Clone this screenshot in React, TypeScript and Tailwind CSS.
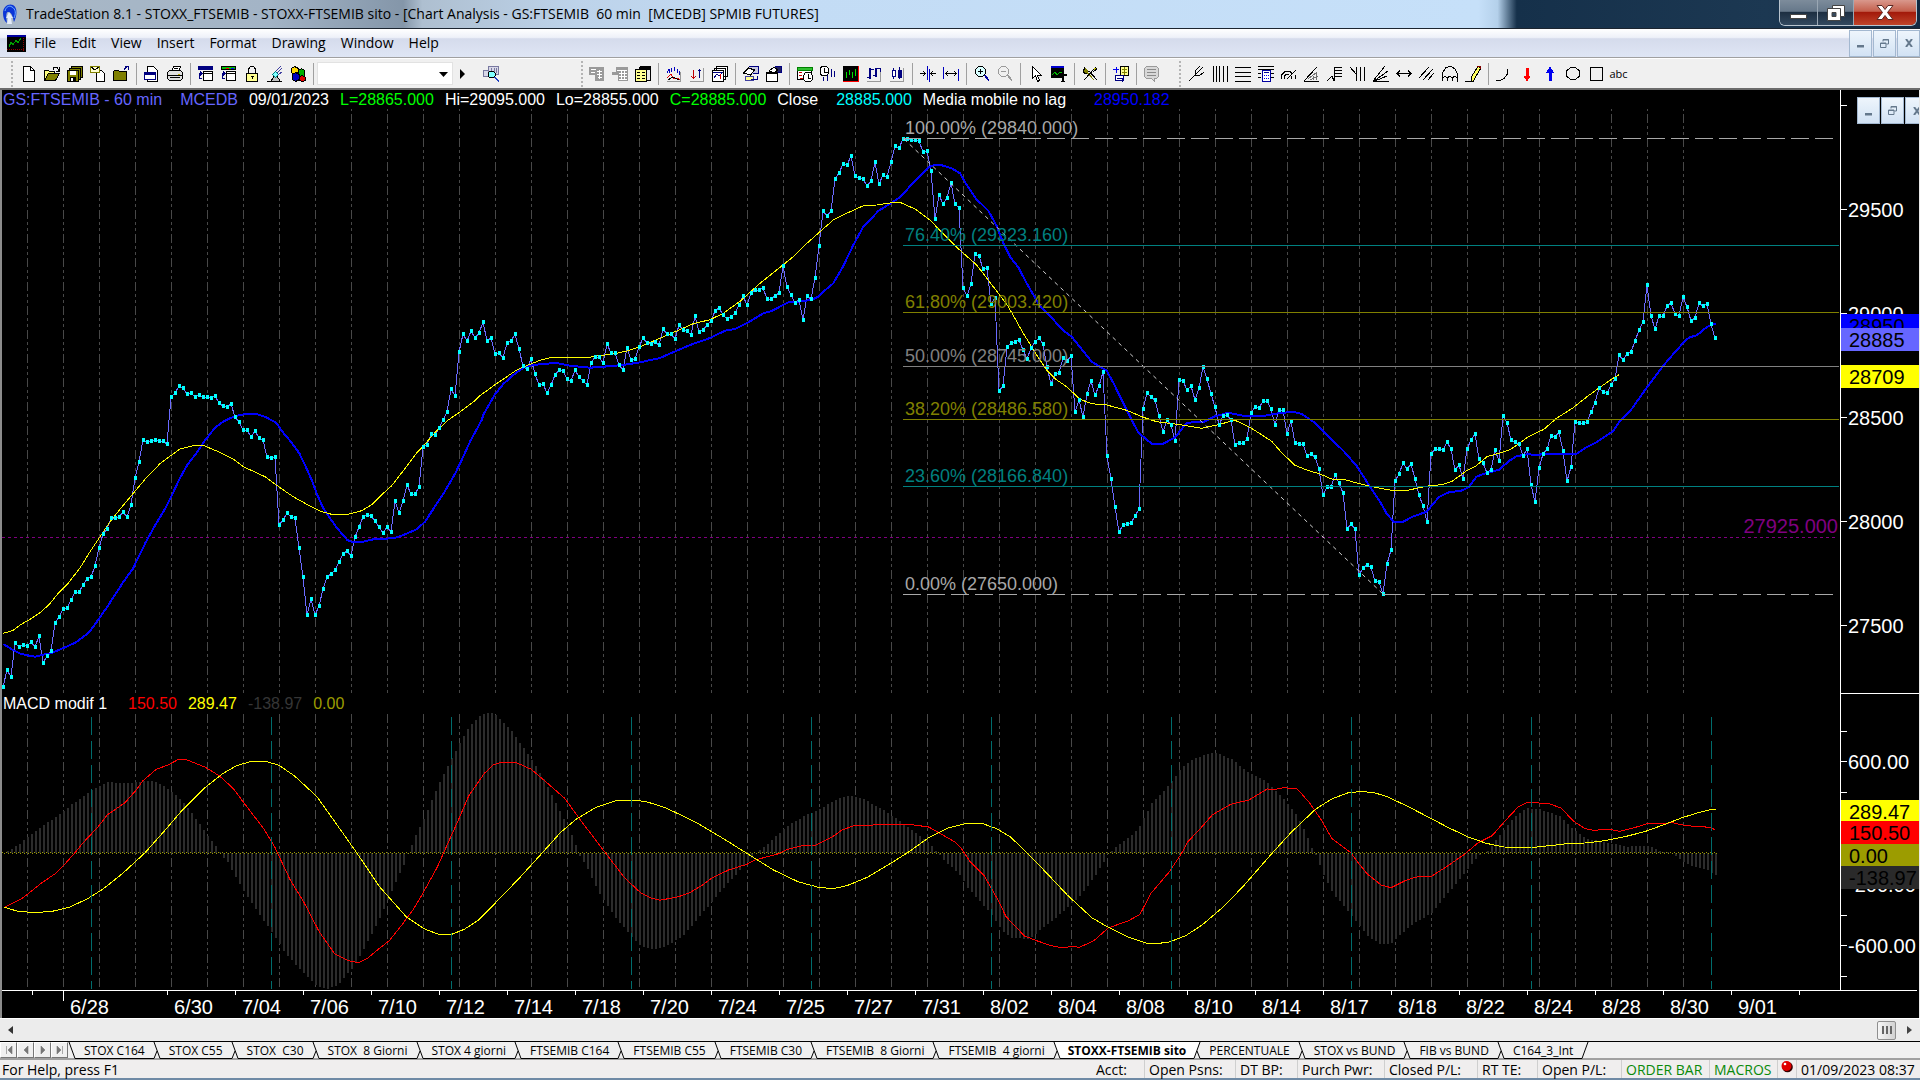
import React from "react";

/* ------------------------------------------------------------------ */
/* Chart data                                                          */
/* ------------------------------------------------------------------ */

// Closing prices, one per bar, as chart heights in thirds of a pixel.
// Each block lists its base line and the readings of consecutive bars.
const CLOSE_BLOCKS: { base: number; v: number[] }[] = [
  {
    base: 360,
    v: [
      981, 930, 951, 849, 861, 855, 858, 846, 861, 828, 909, 888, 873, 789, 771, 747, 744, 720, 696, 696, 675, 657, 651,
      618, 564, 522, 507, 474, 474, 471, 456, 471, 435, 354, 306, 240, 246, 243, 240, 243, 243, 252, 111, 99, 78, 84,
      102, 99, 111, 105, 111, 111, 114, 108, 129, 138, 141, 132, 171, 186, 210, 210, 231, 213, 234, 240, 291, 294, 291,
      495, 480, 459, 471, 474, 564, 651, 765, 717, 765, 738, 687, 651, 642, 630, 606, 582, 573, 588, 531, 501, 471, 465,
      468, 483, 501, 519, 501, 516, 423, 459, 423, 375, 402, 402, 381, 261, 255, 222, 225, 204, 180, 156, 87, 108,
      -24, -78, -57, -87, -66, -81,
    ],
  },
  {
    base: 130,
    v: [
      576, 633, 624, 672, 669, 684, 639, 633, 612, 657, 708, 717, 687, 732, 765, 762, 789, 765, 735, 720, 723, 747, 753,
      720, 741, 753, 765, 699, 681, 681, 699, 642, 669, 669, 705, 720, 654, 690, 687, 651, 624, 639, 642, 636, 645, 597,
      612, 612, 627, 585, 600, 603, 615, 558, 606, 600, 585, 573, 543, 534, 555, 567, 561, 549, 525, 498, 525, 489, 480,
      480, 474, 507, 507, 498, 489, 408, 471, 495, 519, 510, 570, 498, 507, 444, 348, 243, 258, 243, 147, 129, 102, 105,
      78, 138, 144, 147, 168, 153, 96, 162, 135, 141, 96, 48, 54,
    ],
  },
  {
    base: 120,
    v: [
      57, 57, 60, 60, 63, 96, 93, 153, 297, 225, 252, 234, 189, 252, 264, 504, 528, 492, 402, 408, 447, 444, 552, 534,
      813, 798, 681, 669, 666, 660, 690, 717, 684, 666, 654, 672, 741, 792, 762, 759, 714, 723, 708, 876, 840, 892, 822,
      783, 825, 798, 756, 1008, 1077, 1161, 1236, 1215, 1212, 1209, 1188, 1167, 867, 819, 831, 840, 888, 936, 900, 915,
      963, 780, 783, 810, 798, 840, 804, 741, 777, 822, 861, 915, 888, 885, 900, 975, 969, 969, 957, 879, 861, 864, 843,
      843, 867, 915, 870, 870, 942, 904, 969, 972, 972, 1008, 1002, 1011, 1047, 1125, 1101, 1101, 1065, 1089, 1119, 1227,
      1212, 1227, 1365, 1344, 1335, 1341, 1383, 1386, 1422,
    ],
  },
  {
    base: 260,
    v: [
      912, 870, 663, 642, 609, 627, 612, 657, 705, 738, 786, 582, 567, 567, 570, 546, 567, 630, 615, 657, 567, 540, 522,
      597, 609, 639, 630, 570, 603, 468, 489, 540, 546, 552, 588, 567, 675, 726, 624, 582, 567, 528, 531, 516, 573, 663,
      621, 485, 489, 489, 486, 456, 429, 384, 396, 399, 375, 357, 285, 300, 282, 276, 243, 210, 186, 75, 168, 207, 168,
      168, 138, 129, 162, 168, 111, 141, 183, 174, 129, 138, 132, 192, 234,
    ],
  },
];

type Pt = [number, number];

const CLOSE: Pt[] = CLOSE_BLOCKS.flatMap((b) => b.v.map((n) => b.base + n / 3)).map((y, i) => [
  3 + 4 * i,
  Math.round(y),
]);

// Curves are stored in blocks: origin x, origin y, horizontal resolution,
// then x,y pairs. Vertical resolution is three steps per pixel.
type Block = [number, number, number, string];

function curve(blocks: Block[]): Pt[] {
  return blocks.flatMap(([ox, oy, sx, s]) =>
    s.split(" ").map((p) => {
      const [x, y] = p.split(",").map(Number);
      return [ox + x / sx, oy + y / 3] as Pt;
    }),
  );
}

const pts = (a: Pt[]) => a.map(([x, y]) => `${x.toFixed(1)},${y.toFixed(1)}`).join(" ");

const FAST_MA = curve([
  [0, 360, 3, "10,852 34,867 58,880 82,886 106,890 130,884 154,880 178,869 202,859 226,848 250,830 266,818 280,800 298,775 322,740 346,703 370,666 398,627 416,590 438,545 466,495 494,448 514,410 538,358 562,315 590,278 612,245 628,225 646,202 670,185 694,173 718,165 745,161 768,162 795,170 828,188 850,218 875,248 898,280 915,315 935,360 952,405 970,445 990,475 1012,505 1042,540 1055,545 1090,545 1120,538 1150,536 1180,535 1210,525 1250,508 1275,485 1300,447 1330,402 1366,340 1385,300 1410,245 1445,180"],
  [480, 130, 3, "10,855 20,836 45,793 70,762 100,735 130,713 155,706 185,702 230,699 270,707 330,713 370,710 430,705 480,697 540,684 590,662 630,645 690,624 735,602 765,597 800,580 850,550 875,543 925,517 975,513 1000,507 1018,498 1030,485 1060,460 1090,408 1120,345 1150,290 1165,275 1195,243 1235,218 1260,202 1310,147 1345,112"],
  [880, 120, 3, "165,134 180,134 215,145 240,160 260,195 288,236 325,272 350,318 370,370 390,410 415,442 440,490 480,558 500,577 550,632 575,650 605,688 635,725 680,752 700,788 735,860 775,938 815,971 850,971 885,952 920,908 970,906 1005,889 1045,878 1090,887 1110,889 1145,889 1185,881 1240,875 1265,882 1300,905 1340,945 1390,992 1430,1038 1470,1100"],
  [1380, 260, 2.898, "0,725 20,762 40,785 65,786 95,770 135,755 170,712 195,698 240,691 258,680 280,650 300,642 345,629 375,602 395,589 430,582 450,586 480,581 530,581 568,583 595,564 630,545 675,514 695,483 730,446 775,380 820,318 845,288 888,238 900,231 918,226 945,203 962,193 974,192"],
]);

const SLOW_MA = curve([
  [0, 360, 3, "10,820 40,811 60,795 90,778 120,758 146,735 175,700 205,669 240,624 270,575 300,530 330,485 360,448 405,394 440,352 480,311 515,285 540,267 580,257 612,257 650,273 700,297 730,320 795,350 840,383 880,410 920,433 965,455 995,463 1045,463 1085,452 1115,434 1150,400 1175,377 1210,332 1250,279 1270,258 1310,212 1345,180 1380,156 1425,122"],
  [480, 130, 3, "0,797 45,764 110,720 150,703 180,691 210,683 320,683 350,678 400,672 440,663 480,650 540,625 590,603 640,581 690,569 730,550 780,514 840,460 900,412 940,380 975,345 1018,307 1060,270 1100,250 1150,227 1190,225"],
  [880, 120, 3, "35,248 60,247 105,267 150,300 190,342 235,386 290,435 340,500 385,560 430,640 470,705 500,750 530,780 560,800 600,838 635,851 680,855 740,871 790,892 830,905 900,914 965,925 1010,915 1065,901 1110,922 1175,964 1205,998 1245,1036 1280,1050 1320,1062 1355,1077 1395,1079 1450,1094"],
  [1380, 260, 2.898, "0,685 35,691 80,691 120,682 145,677 180,674 210,663 250,633 278,618 310,590 350,578 375,570 400,553 430,530 475,508 510,476 560,443 600,410 640,380 675,355 693,344"],
]);

const MACD_RED = curve([
  [0, 690, 2.24, "10,652 50,625 92,580 125,550 150,515 170,485 185,460 220,410 240,375 280,338 305,300 320,272 350,238 378,224 400,208 418,209 460,232 492,258 522,295 550,345 590,415 615,470 650,570 680,635 715,725 750,792 780,812 803,818 825,803 850,775 872,752 900,705 925,660 945,615 980,530 1000,470 1030,380 1050,318 1085,250 1105,224 1120,218 1155,217 1190,238 1220,272 1265,325 1300,390 1350,478 1400,565 1435,608 1460,625 1478,631 1520,620 1545,608"],
  [700, 690, 2.45, "5,586 30,563 70,540 115,523 135,510 190,492 215,478 250,467 282,466 325,440 348,420 380,406 470,404 520,404 560,411 585,428 625,456 640,475 662,515 695,555 730,630 750,680 795,738 825,752 860,767 890,774 910,769 930,772 965,752 1000,714 1050,692 1078,673 1105,610 1150,545 1180,490 1195,455 1225,417 1255,375 1300,343 1345,330 1390,297 1410,298 1430,293 1462,297"],
  [1300, 690, 2.525, "0,306 25,340 55,392 80,445 128,488 145,515 170,552 205,585 230,593 265,572 300,559 330,560 370,530 415,493 450,458 485,437 520,390 550,352 575,337 630,341 660,355 690,393 718,415 740,421 780,418 808,424 850,411 880,400 905,402 940,398 975,407 1035,412 1048,419"],
]);

const MACD_YELLOW = curve([
  [0, 690, 2.24, "10,652 40,664 80,668 120,663 155,652 195,627 230,598 275,550 325,488 370,420 410,358 460,292 500,250 530,227 560,215 595,214 625,226 660,258 710,320 750,395 800,490 850,590 910,680 950,716 980,732 1012,733 1040,718 1070,692 1120,625 1165,562 1215,488 1255,428 1290,388 1335,352 1380,332 1405,330 1445,334 1490,353 1530,378"],
  [700, 690, 2.45, "0,404 60,448 120,494 180,540 240,575 290,592 325,596 360,587 410,562 470,518 510,487 560,443 610,413 650,401 690,400 725,415 760,440 800,487 850,550 900,615 960,683 1000,712 1050,742 1095,760 1125,760 1150,756 1190,737 1230,705 1280,653 1330,590 1400,492 1450,425"],
  [1300, 690, 2.525, "0,402 40,357 80,327 120,309 155,304 190,309 220,320 270,348 330,385 375,413 425,441 470,460 515,471 590,472 640,466 680,460 720,459 770,452 820,440 870,425 910,408 965,383 1000,370 1040,358 1050,357"],
]);

const HISTOGRAM = curve([
  [0, 690, 2.24, "7,488 40,465 62,438 95,405 130,375 160,342 205,300 240,277 285,279 310,275 335,271 360,283 385,308 410,338 440,392 465,440 485,472 492,490 510,520 530,570 550,615 580,675 610,730 640,795 680,850 710,890 733,897 755,885 790,830 820,760 850,680 880,590 905,518 912,490 930,435 950,380 985,270 1010,205 1030,155 1050,108 1075,75 1097,65 1115,82 1145,125 1180,190 1220,275 1260,385 1285,450 1293,490 1310,525 1345,620 1375,680 1410,735 1435,770 1463,780 1490,770 1530,735"],
  [700, 690, 2.45, "7,665 40,615 75,568 115,515 135,490 165,460 210,410 260,373 285,362 340,323 370,317 400,328 450,362 510,412 555,455 580,488 600,515 635,555 655,595 710,670 740,725 765,745 805,746 830,722 885,668 935,610 970,550 990,510 998,490 1030,460 1070,420 1085,385 1105,340 1145,288 1180,230 1205,208 1245,190 1265,190 1300,207 1345,250 1385,275 1425,322 1460,375"],
  [1300, 690, 2.525, "7,415 27,472 38,495 58,555 80,608 120,665 150,710 170,740 200,762 230,760 250,735 285,700 330,670 360,625 400,570 430,525 450,495 475,480 505,430 540,380 570,355 600,357 655,378 690,420 720,447 765,455 820,470 880,468 905,483 940,490 960,510 990,530 1030,542 1052,558"],
]);

function valueAt(a: Pt[], x: number): number {
  for (let i = 1; i < a.length; i++) {
    if (x <= a[i][0]) {
      const t = Math.max(0, (x - a[i - 1][0]) / (a[i][0] - a[i - 1][0]));
      return a[i - 1][1] + t * (a[i][1] - a[i - 1][1]);
    }
  }
  return a[a.length - 1][1];
}

const ZERO_Y = 853;
const BARS = CLOSE.map(([x]) => {
  const y = Math.round(valueAt(HISTOGRAM, x));
  return { x, y: Math.min(y, ZERO_Y), h: Math.abs(y - ZERO_Y) };
});

const GRID = Array.from({ length: 47 }, (_, i) => 27 + 36 * i);
const CYCLES = Array.from({ length: 10 }, (_, i) => 91 + 180 * i);

const FIBS = [
  { y: 138.5, label: "100.00% (29840.000)", c: "#a8a8a8", dash: "18 6" },
  { y: 245.5, label: "76.40% (29323.160)", c: "#008080" },
  { y: 312.5, label: "61.80% (29003.420)", c: "#808000" },
  { y: 366.5, label: "50.00% (28745.000)", c: "#808080" },
  { y: 419.5, label: "38.20% (28486.580)", c: "#808000" },
  { y: 486.5, label: "23.60% (28166.840)", c: "#008080" },
  { y: 594.5, label: "0.00% (27650.000)", c: "#a8a8a8", dash: "18 6" },
];

const DATES = [
  "6/30", "7/04", "7/06", "7/10", "7/12", "7/14", "7/18", "7/20", "7/24", "7/25", "7/27", "7/31",
  "8/02", "8/04", "8/08", "8/10", "8/14", "8/17", "8/18", "8/22", "8/24", "8/28", "8/30", "9/01",
];

/* ------------------------------------------------------------------ */
/* Chart                                                               */
/* ------------------------------------------------------------------ */

function PricePane() {
  return (
    <svg className="block h-[584px] w-full font-['Liberation_Sans',sans-serif]" role="img" aria-label="FTSEMIB price chart">
      <g transform="translate(-2 -109)">
        <g stroke="#484848" strokeDasharray="9 3 3 3 3 3" strokeDashoffset="19" shapeRendering="crispEdges">
          {GRID.map((x) => (
            <line key={x} x1={x + 0.5} x2={x + 0.5} y1={109} y2={693} />
          ))}
        </g>
        <line x1="2" x2="100%" y1="537.5" y2="537.5" stroke="#800080" strokeDasharray="3 3" />
        <g fill="none" shapeRendering="crispEdges">
          <polyline points={pts(CLOSE)} stroke="#6a6aff" />
          <polyline points={pts(FAST_MA)} stroke="#0000ff" strokeWidth="2" />
          <polyline points={pts(SLOW_MA)} stroke="#ffff00" />
        </g>
        <g fill="#00ffff" shapeRendering="crispEdges">
          {CLOSE.map(([x, y]) => (
            <rect key={x} x={x - 1} y={y - 2} width="3" height="4" />
          ))}
        </g>
        <line x1="904" y1="139" x2="1383" y2="594" stroke="#d0d0d0" strokeDasharray="4 4" />
        {FIBS.map((f) => (
          <g key={f.label}>
            <line x1="903" x2="1839" y1={f.y} y2={f.y} stroke={f.c} strokeDasharray={f.dash} />
            <text x="905" y={f.y - 5} fill={f.c} fontSize="18">
              {f.label}
            </text>
          </g>
        ))}
        <text x="1838" y="533" fill="#800080" fontSize="20" textAnchor="end">
          27925.000
        </text>
      </g>
    </svg>
  );
}

function MacdPane() {
  return (
    <svg className="block h-[277px] w-full overflow-visible" role="img" aria-label="MACD indicator">
      <g transform="translate(-2 -714)">
        <g stroke="#484848" strokeDasharray="9 3 3 3 3 3" shapeRendering="crispEdges">
          {GRID.map((x) => (
            <line key={x} x1={x + 0.5} x2={x + 0.5} y1={714} y2={988} />
          ))}
        </g>
        <g fill="#2c2c2c" shapeRendering="crispEdges">
          {BARS.map((b) => (
            <rect key={b.x} x={b.x} y={b.y} width="2" height={b.h} />
          ))}
        </g>
        <g stroke="#9c9c00" strokeDasharray="1 3" shapeRendering="crispEdges">
          <line x1="2" x2="1718" y1="852.5" y2="852.5" />
          <line x1="4" x2="1718" y1="853.5" y2="853.5" />
        </g>
        <g fill="none" shapeRendering="crispEdges">
          <polyline points={pts(MACD_RED)} stroke="#ff0000" />
          <polyline points={pts(MACD_YELLOW)} stroke="#ffff00" />
        </g>
        <g stroke="#006c6c" strokeDasharray="18 6" shapeRendering="crispEdges">
          {CYCLES.map((x) => (
            <line key={x} x1={x + 0.5} x2={x + 0.5} y1={717} y2={989} />
          ))}
        </g>
      </g>
    </svg>
  );
}

const SCALE_TICKS = [105, 209, 313, 417, 521, 625, 731, 761, 792, 915, 945, 976];
const SCALE_LABELS: [number, string][] = [
  [209, "29500"],
  [313, "29000"],
  [417, "28500"],
  [521, "28000"],
  [625, "27500"],
  [761, "600.00"],
  [884, "-200.00"],
  [945, "-600.00"],
];
const SCALE_TAGS: [number, number, string, string][] = [
  [314, 23, "28950", "#0000ff"],
  [328, 23, "28885", "#6666ff"],
  [365, 23, "28709", "#ffff00"],
  [800, 21, "289.47", "#ffff00"],
  [821, 23, "150.50", "#ff0000"],
  [844, 22, "0.00", "#9c9c00"],
  [866, 23, "-138.97", "#2a2a2a"],
];

function ScaleColumn() {
  return (
    <svg className="block h-[901px] w-full font-['Liberation_Sans',sans-serif]" role="img" aria-label="Value scale">
      <g transform="translate(-1840 -90)" fontSize="20">
        <g stroke="#fff" shapeRendering="crispEdges">
          <line x1="1840.5" x2="1840.5" y1="90" y2="991" />
          <line x1="1840" x2="1919" y1="693.5" y2="693.5" />
          {SCALE_TICKS.map((y) => (
            <line key={y} x1="1841" x2="1847" y1={y + 0.5} y2={y + 0.5} />
          ))}
        </g>
        {SCALE_LABELS.map(([y, t]) => (
          <text key={t} x="1848" y={y + 8} fill="#fff">
            {t}
          </text>
        ))}
        {SCALE_TAGS.map(([y, h, t, c]) => (
          <g key={t}>
            <rect x="1841" y={y} width="78" height={h} fill={c} />
            <text x="1849" y={y + 19} fill="#000">
              {t}
            </text>
          </g>
        ))}
      </g>
    </svg>
  );
}

function DateAxis() {
  return (
    <svg className="block h-[28px] w-full font-['Liberation_Sans',sans-serif]" role="img" aria-label="Date axis">
      <g transform="translate(-2 -990)">
        <g stroke="#fff" shapeRendering="crispEdges">
          <line x1="2" x2="100%" y1="990.5" y2="990.5" />
          <line x1="32" x2="32" y1="991" y2="995" />
          <line x1="63.5" x2="63.5" y1="991" y2="1001" />
          {[...DATES, "end"].map((d, i) => (
            <line key={d} x1={167.5 + 68 * i} x2={167.5 + 68 * i} y1="991" y2="995" />
          ))}
        </g>
        <g fill="#fff" fontSize="20">
          <text x="70" y="1014">
            6/28
          </text>
          {DATES.map((d, i) => (
            <text key={d} x={174 + 68 * i} y="1014">
              {d}
            </text>
          ))}
        </g>
      </g>
    </svg>
  );
}

/* ------------------------------------------------------------------ */
/* Toolbar icons: [path, stroke, fill]                                 */
/* ------------------------------------------------------------------ */

type Shape = [string, string, string?];

const K = "#000";
const N = "#000080";
const W = "#fff";
const O = "#808000";
const G = "#9a9a9a";

const ICONS: Record<string, Shape[]> = {
  New: [["M2.5 .5h7l4 4v11h-11z", K, W], ["M9.5 .5v4h4", K]],
  Open: [["M.5 13.5v-9h4l1 1h5v3", K, "#ffff80"], ["M.5 14.5l4-7h11l-4 7z", K, O], ["M9 3.5l1-2h3l2 3M15.5 1v4h-4", K]],
  "Save all": [["M4.5 .5h11v11h-11z", K, O], ["M2.5 2.5h11v11h-11z", K, O], ["M.5 4.5h11v11h-11z", K, O], ["M3 5h6v4h-6z", "none", W], ["M3 11h6v4h-6z", "none", K], ["M4 12h2v3h-2z", "none", W]],
  "Mail document": [["M6.5 4.5h5l3 3v8h-8z", K, W], ["M.5 .5h9v6h-9z", O, "#ffffd0"], ["M1 1l4 3 4-3", K]],
  "Close workspace": [["M.5 14.5v-9l1-1h4l1 1h7v9z", K, O], ["M11 3.5l3-3M15.5 4v-3.500h-4", N]],
  "Document window": [["M3.500 .5h6l4 4v11h-10z", K, W], ["M.5 6.500h11v7h-11z", N, W], ["M.5 6h11v2h-11z", N, N]],
  Print: [["M4.500 5.500l2-5h7l-2 5z", K, W], ["M.5 6.500l2-2h11l2 2v6l-2 2h-11l-2-2z", K, "#e0e0e0"], ["M1 9.500h14M3 11.500h10", K], ["M7 2.500h4M6 4.500h4", K], ["M11 8h2", "#c0b000"]],
  "Time bars": [["M.5 .5h14v3h-14z", N, N], ["M5.500 5.500h9v9h-9z", K, W], ["M5 7.500h9", K], ["M4 12.500h-3v-5h3M2 5.500l2 2-2 2", N]],
  "Status bars": [["M.5 .5h14v3h-14z", K, "#00c000"], ["M5 2h3", "#f00"], ["M10 2h3", "#00f"], ["M5.500 5.500h9v9h-9z", K, W], ["M5 7.500h9", K], ["M4 12.500h-3v-5h3M2 5.500l2 2-2 2", N]],
  Lock: [["M4.500 7v-4l2-2.500h3l2 2.500v4", K], ["M2.500 7.500h11v8h-11z", K, "#ffff90"], ["M8 10v3M7 10.500h3", K]],
  Satellite: [["M8 9l-4 6h9l-3-5", K, "#c0c0c0"], ["M5.500 8.500l3-3 3 3-3 3z", "#008080", "#80ffff"], ["M9 5l5-5M10 7l5-5M11 9l4-3", "#4040a0"], ["M0 15.500h15", K]],
  Blocks: [["M1.500 2.500l3-2 4 2v4l-4 2-3-2z", K, "#ffd800"], ["M8.500 4.500l3-2 3 2v5l-3 2-3-2z", K, "#00b000"], ["M2.500 8.500l3-2 4 2v5l-4 2-3-2z", K, "#0000c0"], ["M9.500 10.500l3-1 3 2v3l-3 1-3-1z", K, "#e00000"]],
  "Find symbol": [["M.5 4.500h5v6h-5zM5.500 .5h10v8h-10z", "#7878a0", "#d8d8e8"], ["M8 2v5M11 2v5M13 2v5", "#7878a0"], ["M6.500 5.500h4l1.500 1.500v3l-1.500 1.500h-4l-1.500-1.500v-3z", K, "#80ffff"], ["M11 11l5 5M12 11l4 4", "#2040c0"]],
  "Order entry": [["M0 1h15v14h-9v-6h-6z", "none", G], ["M2 3.500h5M2 6.500h4M8 5.500h5M8 8.500h5M9 11.500h4M10.500 4v9", W]],
  "Order grid": [["M4 1h12v14h-10v-6h-6v-3h4z", "none", G], ["M5 4.500h10M7 7.500h8M7 10.500h8M7 13h8M9.500 4v10M12.500 4v10", W]],
  "Quote list": [["M4.500 .5h11v14h-4", K, "#e8e8e8"], ["M.5 3.500h11v12h-11z", K, "#ffff90"], ["M4.500 1h11v2h-11z", K, K], ["M2 6.500h3M2 9.500h3M2 12.500h3M7 6.500h3M7 9.500h3M7 12.500h3", K]],
  "Insert indicator": [["M1 15.500h13.500v-10", G], ["M1 7l2-4v4M5 6v-4M8 5v-4M11 7v-4M13 9v-4", "#0000c0"], ["M1 12l4-4 3 5 3-1 3 2", "#e00000"], ["M2 14l5-3 6 3", K]],
  "Insert signal": [["M1 15.500h13.500v-14", G], ["M4.500 4v9M2.500 10.500l2 2 2-2", "#c00000"], ["M10.500 3v9M8.500 5.500l2-2 2 2", N]],
  "Chart stack": [["M4.500 .5h11v10h-11zM2.500 2.500h11v11h-11z", K, W], ["M.5 4.500h11v11h-11z", K, W], ["M1 6h10M2 12l3-4 2 2 3-3", N], ["M8 8v5", "#e00000"]],
  "Format symbol": [["M5.500 .5h10v7h-6", N, "#c8c8e0"], ["M.5 7l5-5 6 2-4 5z", K, W], ["M2 10.500h8v4h-8z", "#4040a0", "#ffff90"], ["M8 13.500h6v-4", N]],
  "Format page": [["M8.500 .5h7v6h-4", N, "#202060"], ["M3 5l5-4 4 3-4 3z", K, W], ["M.5 6.500h11v9h-11z", K, W], ["M1 7.500h10", K]],
  Calendar: [["M.5 2.500h14v11h-14z", K, W], ["M0 1h15v3h-15z", "#008000", "#30c030"], ["M2 6.500h3M2 9.500h3M3 12.500h3", "#c00000"], ["M8.500 6.500h5l2 3v4l-2 2h-5l-2-2v-4z", K, W], ["M11 8v4h3", K]],
  "Time interval": [["M1.500 .5h5l2 2v5l-2 2h-5l-1-2v-5z", K, W], ["M4.500 2v4h3", K], ["M3.500 11v4M7.500 9v6M11.500 3v8M14.500 5v6", N]],
  "Black chart": [["M0 0h16v16h-16z", "none", K], ["M15.500 0v16M0 15.500h16", "#f00"], ["M3.500 6v6M6.500 4v5M9.500 6v6M12.500 3v7", "#00e000"]],
  "OHLC bars": [["M1 15.500h13.500v-14", G], ["M3 2h2v11h-2zM9 2h2v9h-2z", "none", N], ["M1 11.500h3M4 3.500h4M7 9.500h3M10 2.500h4v3", N]],
  Candles: [["M1 15.500h13.500v-14", G], ["M4.500 2v11M10.500 1v12", N], ["M3 4h3v6h-3z", N, W], ["M9 4h3v7h-3z", N, N]],
  "Decrease spacing": [["M0 7.500h5M3 5l2 2.500-2 2.500M16 7.500h-5M13 5l-2 2.500 2 2.500", K], ["M7.500 0v14M9.500 3v13", "#0000c0"]],
  "Increase spacing": [["M3 7.500h10M5 5l-2 2.500 2 2.500M11 5l2 2.500-2 2.500", K], ["M.5 1v12M15.500 3v12", "#0000c0"]],
  "Zoom in": [["M4.500 .5h4l3 3v4l-3 3h-4l-3-3v-4z", K, "#d8ffff"], ["M4 5.500h5M6.500 3v5", K], ["M10 9l5 6M11 9l4 5", "#0000a0"]],
  "Zoom out": [["M4.500 .5h4l3 3v4l-3 3h-4l-3-3v-4z", G], ["M4 5.500h5", G], ["M10 9l5 6M11 9l4 5", G]],
  Pointer: [["M4.500 .5v12l3-3 2 6 2-1-2-5h4z", K, W]],
  "Chart text": [["M0 0h13v2h-13z", "none", "#0000d0"], ["M0 2h13v10h-13z", "none", K], ["M1 9l3-3 2 3 3-3 2 1", "#00c000"], ["M8 8h8v2h-8zM11 8h2v8h-2zM10 15h4v1h-4z", "none", K]],
  Tools: [["M3 1l-2 5 3 2 3-3 8 9", K, O], ["M3 4l9 10", O], ["M14 1l-12 13", K], ["M13 1l2 2-4 3", K, "#c0c000"]],
  "Add workspace": [["M0 3.500h6M3 1v6", "#0000f0"], ["M7.500 .5h8v9h-8z", K, "#ffff90"], ["M9 3.500h5M9 6.500h5M11.500 1v8", O], ["M2.500 9.500h8v5h-8z", N, W], ["M4 12.500h5v3", N]],
  Comment: [["M2.500 .5h10l2 2v8l-2 2h-2v3l-3-3h-5l-2-2v-8z", G, "#d8d8d8"], ["M3 3.500h9M3 6.500h9M3 9.500h9", "#8a8a8a"]],
  Pitchfork: [["M0 15l6-6M6 9l1-5 4-4M6 9l4 1 5-4M7 8l7-7", K]],
  "Vertical lines": [["M1.500 0v16M4.500 0v16M7.500 0v16M11.500 0v16M15.500 0v16", K]],
  "Horizontal lines": [["M0 1.500h16M0 6.500h16M0 10.500h16M0 15.500h16", K]],
  Calculator: [["M0 .5h16M0 3.500h16M0 7.500h3M13 7.500h3M0 11.500h3M13 11.500h3", K], ["M4.500 4.500h8v11h-8z", "#0000a0", W], ["M6 6.500h5", "#0000a0"], ["M6 9.500h1M8 9.500h1M10 9.500h1M6 12.500h1M8 12.500h1M10 12.500h1", "#0000f0"]],
  "Speed arcs": [["M.5 13v-4l4-4h4l3 3M3.500 13v-3l2-2h2M6 13l9-9M10 13v-3M14 13v-4", K]],
  "Gann fan": [["M0 15.500h15", K], ["M0 15l13-14", K], ["M4 13l9-7M6 14l8-4M9 10v4M12 6v8", "#707070"]],
  "Percent retrace": [["M0 15l5-5 2 5v-14", K], ["M8 1.500h7M8 4.500h7M8 7.500h7M8 10.500h7", K]],
  "Fib time": [["M0 1l6 7M6.500 1v14M10.500 1v14M14.500 1v14", K]],
  "Trend fan": [["M0 15.500h16M0 15l12-15M1 15l14-10M2 15l12-5", K]],
  Extend: [["M1 7.500h14M4 4.500l-3 3 3 3M12 4.500l3 3-3 3", K]],
  "Parallel lines": [["M0 12l10-11M4 14l10-11M9 14l6-7", K]],
  Cycles: [["M.5 15v-8l3-5 4-1.500h2l4 3 2 5v7M1 12l2-2 2 2v3M5 12l3-2 2 2v3M10 12l3-2 2 2", K]],
  Pencil: [["M0 15.500h8l7-12v-2l-2-1-7 11v3", K, "#ffff60"], ["M12 0h3v3", "#800000"]],
  "Arc tool": [["M0 14.500h4l4-2 3-4v-6", K]],
  "Down arrow": [["M7 2h2v8h2l-3 5-3-5h2z", "#f00", "#f00"]],
  "Up arrow": [["M7 14h2v-8h2l-3-5-3 5h2z", "#0000f0", "#0000f0"]],
  Ellipse: [["M5.500 1.500h5l4 3.500v5l-4 3.500h-5l-4-3.500v-5z", K]],
  Rectangle: [["M2.500 1.500h12v13h-12z", K]],
};

const GROUP_1 = ["New", "Open", "Save all", "Mail document", "Close workspace", "|", "Document window", "Print", "|", "Time bars", "Status bars", "Lock", "Satellite", "Blocks", "|"];
const GROUP_2 = ["Order entry", "Order grid", "Quote list", "|", "Insert indicator", "Insert signal", "Chart stack", "|", "Format symbol", "Format page", "|", "Calendar", "Time interval", "Black chart", "OHLC bars", "Candles", "|", "Decrease spacing", "Increase spacing", "|", "Zoom in", "Zoom out", "|", "Pointer", "Chart text", "|", "Tools", "|", "Add workspace", "|", "Comment"];
const GROUP_3 = ["Pitchfork", "Vertical lines", "Horizontal lines", "Calculator", "Speed arcs", "Gann fan", "Percent retrace", "Fib time", "Trend fan", "Extend", "Parallel lines", "Cycles", "Pencil", "|", "Arc tool", "Down arrow", "Up arrow", "Ellipse", "Rectangle"];

function ToolButton({ name }: { name: string }) {
  return (
    <button type="button" aria-label={name} className="flex h-6 w-[23px] shrink-0 items-center justify-center">
      <svg viewBox="0 0 16 16" className="h-4 w-4" shapeRendering="crispEdges">
        {ICONS[name].map(([d, s, f], i) => (
          <path key={i} d={d} stroke={s} fill={f ?? "none"} />
        ))}
      </svg>
    </button>
  );
}

function Tools({ items }: { items: string[] }) {
  return (
    <div className="flex items-center">
      {items.map((n, i) =>
        n === "|" ? (
          <span key={i} className="flex w-2 justify-center">
            <span className="h-[22px] w-px bg-[#a0a0a0]" />
          </span>
        ) : (
          <ToolButton key={i} name={n} />
        ),
      )}
    </div>
  );
}

function Grip() {
  return <span className="h-[26px] w-0 border-l-2 border-dotted border-[#b4b4b4]" />;
}

function Toolbar() {
  return (
    <div className="flex h-[32px] items-center border-t border-b-2 border-t-white border-b-[#6c6c6c] bg-[#f0f0f0] pl-[11px]">
      <Grip />
      <div className="ml-1 flex items-center">
        <Tools items={GROUP_1} />
        <div className="relative">
          <select aria-label="Symbol" className="block h-[23px] w-[136px] appearance-none border border-[#e2e2e2] bg-white" />
          <svg viewBox="0 0 9 5" className="pointer-events-none absolute top-[10px] right-[5px] h-[5px] w-[9px]">
            <path d="M0 0h9l-4.500 5z" />
          </svg>
        </div>
        <button type="button" aria-label="Go" className="flex h-6 w-[18px] items-center justify-center">
          <svg viewBox="0 0 5 10" className="h-[10px] w-[5px]">
            <path d="M0 0l5 5-5 5z" />
          </svg>
        </button>
        <span className="w-2" />
        <ToolButton name="Find symbol" />
      </div>
      <span className="w-[79px]" />
      <Grip />
      <div className="ml-[2px]">
        <Tools items={GROUP_2} />
      </div>
      <span className="w-4" />
      <Grip />
      <div className="ml-1 flex items-center">
        <Tools items={GROUP_3} />
        <button type="button" className="h-6 w-[23px] font-['Open_Sans',sans-serif] text-[11px] leading-6">
          abc
        </button>
      </div>
    </div>
  );
}

/* ------------------------------------------------------------------ */
/* Window frame                                                        */
/* ------------------------------------------------------------------ */

function TitleBar() {
  return (
    <header className="flex h-[29px] items-start justify-between border-b border-[#1c2530] bg-[linear-gradient(90deg,#a9b8c6_0,#a3b4c6_14%,#8496a9_21%,#aebfd0_22%,#bdd3ea_30%,#c3dcf5_42%,#c6e0f9_77%,#b4d0ea_78%,#15304a_79%,#1c3852_92%,#122840_100%)]">
      <div className="flex h-7 items-center">
        <svg viewBox="0 0 18 22" className="h-[22px] w-[18px]">
          <path d="M3 10C3 3 9 0 13 2c5 3 4 11 1 17-1-4-2-10-6-10-2 0-2 4-1 11-3-2-4-6-4-10z" fill="#0b35d8" />
          <path d="M5 8c1-4 4-6 7-4 4 2 4 7 2 11" stroke="#6fb0ff" fill="none" />
          <path d="M9 9l4 6h-2l1 6h-5l1-6h-2z" fill="#e4ecfa" />
        </svg>
        <h1 className="ml-2 font-['Open_Sans',sans-serif] text-[14px] leading-7 whitespace-pre text-black">
          {"TradeStation 8.1 - STOXX_FTSEMIB - STOXX-FTSEMIB sito - [Chart Analysis - GS:FTSEMIB  60 min  [MCEDB] SPMIB FUTURES]"}
        </h1>
      </div>
      <div className="mr-[3px] flex h-[26px] overflow-hidden rounded-b-md border border-t-0 border-[#b9c4ce]">
        <button type="button" aria-label="Minimize" className="flex w-[38px] items-center justify-center border-r border-[#9aa7b4] bg-[linear-gradient(#7d8c9b_0,#66788a_45%,#1d2f42_50%,#33495f_100%)] pt-2">
          <span className="h-[5px] w-[17px] border border-[#444] bg-white" />
        </button>
        <button type="button" aria-label="Restore" className="flex w-[36px] items-center justify-center border-r border-[#9aa7b4] bg-[linear-gradient(#7d8c9b_0,#66788a_45%,#1d2f42_50%,#33495f_100%)]">
          <svg viewBox="0 0 20 18" className="h-[18px] w-5">
            <path d="M6.500 1.500h12v11h-12z" fill="#fff" stroke="#444" />
            <path d="M1.500 4.500h13v12h-13z" fill="#fff" stroke="#444" />
            <path d="M6 8.500h4v4h-4z" fill="#34495e" stroke="#444" />
          </svg>
        </button>
        <button type="button" aria-label="Close" className="flex w-[62px] items-center justify-center bg-[linear-gradient(#d9988c_0,#c4604d_45%,#a31a0a_50%,#c0442a_100%)]">
          <svg viewBox="0 0 18 15" className="h-[15px] w-[18px]">
            <path d="M1 .5h5l3 4 3-4h5l-5.500 7 5.500 7h-5l-3-4-3 4h-5l5.500-7z" fill="#fff" stroke="#5a2a24" />
          </svg>
        </button>
      </div>
    </header>
  );
}

function MdiButtons({ label }: { label: string }) {
  const cls =
    "flex h-[27px] w-[23px] shrink-0 items-center justify-center border border-[#a3b8d0] bg-[linear-gradient(#eef5fc_0,#e0ecf8_50%,#d2e2f4_100%)]";
  return (
    <div className="flex gap-px">
      <button type="button" aria-label={`Minimize ${label}`} className={cls}>
        <svg viewBox="0 0 7 10" className="h-[10px] w-[7px]">
          <path d="M0 7h7v2.500h-7z" fill="#64788c" />
        </svg>
      </button>
      <button type="button" aria-label={`Restore ${label}`} className={cls}>
        <svg viewBox="0 0 9 9" className="h-[9px] w-[9px]" fill="none" stroke="#64788c">
          <path d="M3 2.500v-2h5.500v4.500h-2M3 1h6M.5 4h5.500v4.500h-5.500zM0 4.500h6" />
        </svg>
      </button>
      <button type="button" aria-label={`Close ${label}`} className={cls}>
        <svg viewBox="0 0 8 8" className="h-2 w-2" fill="none" stroke="#64788c" strokeWidth="2">
          <path d="M1 0l6 8M7 0l-6 8" />
        </svg>
      </button>
    </div>
  );
}

const MENUS = ["File", "Edit", "View", "Insert", "Format", "Drawing", "Window", "Help"];

function MenuBar() {
  return (
    <nav className="flex h-[29px] items-center justify-between border-b border-[#a0a0a0] bg-[linear-gradient(#ffffff_0,#eef1f9_30%,#d5dbec_35%,#dfe6f5_100%)]">
      <div className="flex items-center font-['Open_Sans',sans-serif] text-[14px] leading-5">
        <svg viewBox="0 0 19 17" className="mr-2 ml-[7px] h-[17px] w-[19px]" shapeRendering="crispEdges">
          <path d="M0 0h19v17h-19z" fill="#000" />
          <path d="M0 0h19v2h-19z" fill="#0000a0" />
          <path d="M2 12l2-5 2 3 3-5 2 3 3-5" stroke="#00a000" fill="none" />
          <path d="M0 14.500h17M16.500 3v13" stroke="#900000" strokeDasharray="1 1" />
        </svg>
        {MENUS.map((m) => (
          <button key={m} type="button" className="mr-[15px]">
            {m}
          </button>
        ))}
      </div>
      <MdiButtons label="workspace" />
    </nav>
  );
}

function ChartWindow() {
  return (
    <main className="relative flex flex-col overflow-hidden border-r border-l-2 border-r-[#e8e8e8] border-l-[#8c8c8c] bg-black">
      <div className="flex">
        <div className="min-w-0 flex-1 font-['Liberation_Sans',sans-serif] text-[16px] text-white">
          <div className="flex h-[19px] items-center pl-px leading-[20px] whitespace-pre">
            <span className="text-[#6666ff]">GS:FTSEMIB - 60 min</span>
            <span className="ml-[18px] text-[#6666ff]">MCEDB</span>
            <span className="ml-[11px]">09/01/2023</span>
            <span className="ml-[11px] text-[#00ff00]">L=28865.000</span>
            <span className="ml-[11px]">Hi=29095.000</span>
            <span className="ml-[11px]">Lo=28855.000</span>
            <span className="ml-[11px] text-[#00ff00]">C=28885.000</span>
            <span className="ml-[11px]">Close</span>
            <span className="ml-[18px] text-[#00ffff]">28885.000</span>
            <span className="ml-[11px]">Media mobile no lag</span>
            <span className="ml-[28px] text-[#0000ff]">28950.182</span>
          </div>
          <PricePane />
          <div className="flex h-[21px] items-center pl-px leading-[21px]">
            <span>MACD modif 1</span>
            <span className="ml-[21px] text-[#ff0000]">150.50</span>
            <span className="ml-[11px] text-[#ffff00]">289.47</span>
            <span className="ml-[11px] text-[#363636]">-138.97</span>
            <span className="ml-[11px] text-[#9c9c00]">0.00</span>
          </div>
          <MacdPane />
        </div>
        <div className="w-[79px] shrink-0">
          <ScaleColumn />
        </div>
      </div>
      <div className="-mt-px">
        <DateAxis />
      </div>
      <div className="absolute top-[7px] right-[-9px]">
        <MdiButtons label="chart" />
      </div>
    </main>
  );
}

function ScrollBar() {
  return (
    <div className="flex h-[23px] items-center justify-between border-t border-white bg-[#ececec] px-2">
      <button type="button" aria-label="Scroll left">
        <svg viewBox="0 0 5 8" className="h-2 w-[5px]">
          <path d="M5 0v8l-5-4z" fill="#333" />
        </svg>
      </button>
      <div className="flex items-center gap-[11px]">
        <span className="flex h-[19px] w-[19px] items-center justify-center gap-[2px] rounded-xs border border-[#8f8f8f] bg-[linear-gradient(90deg,#f6f6f6,#d2d2d2)]">
          <span className="h-2 w-[2px] bg-[#666]" />
          <span className="h-2 w-[2px] bg-[#666]" />
          <span className="h-2 w-[2px] bg-[#666]" />
        </span>
        <button type="button" aria-label="Scroll right">
          <svg viewBox="0 0 5 8" className="h-2 w-[5px]">
            <path d="M0 0v8l5-4z" fill="#444" />
          </svg>
        </button>
      </div>
    </div>
  );
}

const TABS = [
  "STOX C164", "STOX C55", "STOX  C30", "STOX  8 Giorni", "STOX 4 giorni", "FTSEMIB C164", "FTSEMIB C55", "FTSEMIB C30",
  "FTSEMIB  8 Giorni", "FTSEMIB  4 giorni", "STOXX-FTSEMIB sito", "PERCENTUALE", "STOX vs BUND", "FIB vs BUND", "C164_3_Int",
];
const ACTIVE = 10;

const NAV: [string, string][] = [
  ["First tab", "M1.500 0v8M7 0v8l-4-4z"],
  ["Previous tab", "M6 0v8l-4-4z"],
  ["Next tab", "M2 0v8l4-4z"],
  ["Last tab", "M1 0v8l4-4zM6.500 0v8"],
];

function Slant({ kind }: { kind: "first" | "mid" | "into" | "outof" | "last" }) {
  return (
    <svg viewBox="0 0 8 17" className="h-[17px] w-2 shrink-0" fill="none" stroke="#000">
      {kind === "into" && <path d="M1 0h7v17h-1z" fill="#fff" stroke="none" />}
      {kind === "outof" && <path d="M0 0h7l-6 17h-1z" fill="#fff" stroke="none" />}
      {kind !== "outof" && kind !== "last" && <path d="M1 0l6 16.500h1" />}
      {(kind === "outof" || kind === "last") && <path d="M7 0l-6 16.500h-1" />}
      {(kind === "mid" || kind === "into") && <path d="M4 9l-3 7.500h-1" />}
      {kind === "outof" && <path d="M4 9l3 7.500h1" />}
    </svg>
  );
}

function TabStrip() {
  return (
    <div className="flex h-[19px] items-start border-t border-b-2 border-t-black border-b-[#a0a0a0] bg-[#f0f0f0] font-['Open_Sans',sans-serif] text-[12px] leading-[15px]">
      {NAV.map(([n, d]) => (
        <button key={n} type="button" aria-label={n} className="flex h-4 w-[17px] items-center justify-center border border-t-white border-r-[#777] border-b-[#777] border-l-white bg-[#f0f0f0]">
          <svg viewBox="0 0 8 8" className="h-2 w-2" fill="#777" stroke="#777" strokeWidth=".6">
            <path d={d} />
          </svg>
        </button>
      ))}
      <Slant kind="first" />
      {TABS.map((t, i) => (
        <React.Fragment key={t}>
          {i > 0 && <Slant kind={i === ACTIVE ? "into" : i === ACTIVE + 1 ? "outof" : "mid"} />}
          <button
            type="button"
            className={
              i === ACTIVE
                ? "h-[17px] border-b border-black bg-white px-[7px] font-bold whitespace-pre"
                : "h-[17px] border-b border-black px-2 whitespace-pre"
            }
          >
            {t}
          </button>
        </React.Fragment>
      ))}
      <Slant kind="last" />
    </div>
  );
}

function StatusBar() {
  const cell = "border-l border-[#cfcfcf] pl-1 whitespace-nowrap";
  return (
    <footer className="flex h-5 items-stretch border-b-2 border-[#6f8aa5] bg-[#f0eeee] font-['Open_Sans',sans-serif] text-[14px] leading-[20px]">
      <span className="flex-1 pl-[2px]">For Help, press F1</span>
      <span className="w-[48px]">Acct:</span>
      <span className={`${cell} w-[91px]`}>Open Psns:</span>
      <span className={`${cell} w-[62px]`}>DT BP:</span>
      <span className={`${cell} w-[87px]`}>Purch Pwr:</span>
      <span className={`${cell} w-[93px]`}>Closed P/L:</span>
      <span className={`${cell} w-[60px]`}>RT TE:</span>
      <span className={`${cell} w-[84px]`}>Open P/L:</span>
      <span className={`${cell} w-[88px] text-[#0a8a0a]`}>ORDER BAR</span>
      <span className={`${cell} w-[68px] text-[#0a8a0a]`}>MACROS</span>
      <span className="flex w-[19px] justify-center border-l border-[#cfcfcf]">
        <svg viewBox="0 0 12 14" className="h-[14px] w-3">
          <circle cx="6.500" cy="7" r="5.300" fill="#300" />
          <circle cx="5.500" cy="6" r="5" fill="#e00000" />
          <circle cx="4" cy="4" r="1.300" fill="#fff" />
        </svg>
      </span>
      <span className={`${cell} w-[124px]`}>01/09/2023 08:37</span>
    </footer>
  );
}

export default function App() {
  return (
    <div className="flex min-h-screen flex-col overflow-hidden bg-[#f0f0f0] text-black">
      <TitleBar />
      <MenuBar />
      <Toolbar />
      <ChartWindow />
      <ScrollBar />
      <TabStrip />
      <StatusBar />
    </div>
  );
}
